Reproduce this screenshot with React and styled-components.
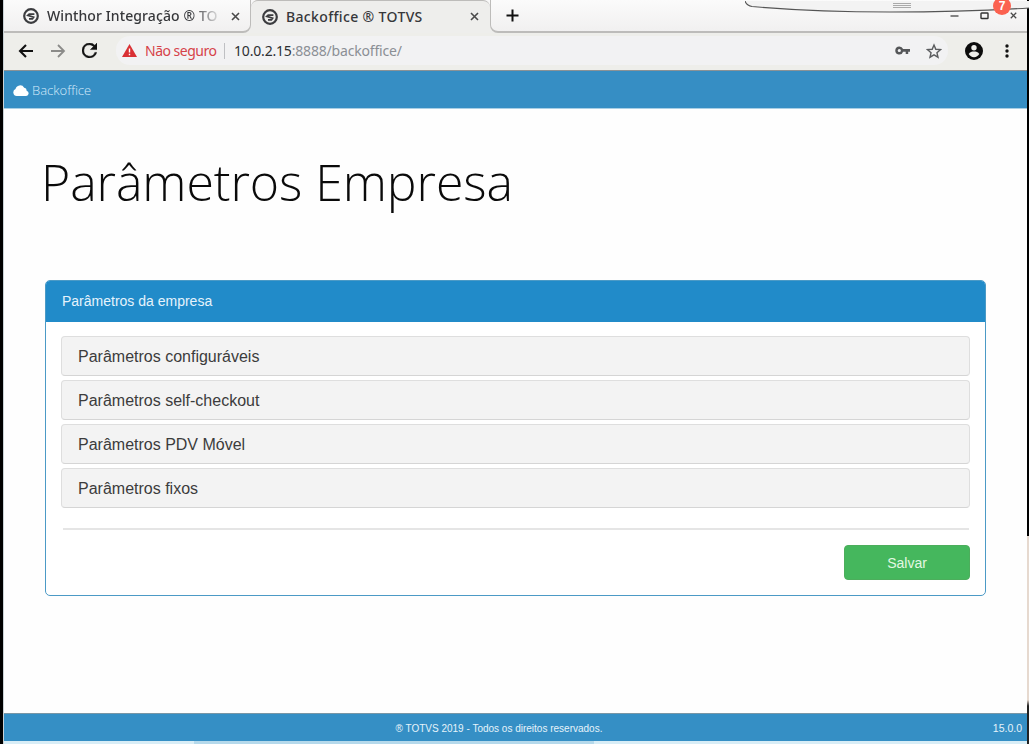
import React from "react";
import styled, { createGlobalStyle } from "styled-components";

const sections = [
  "Parâmetros configuráveis",
  "Parâmetros self-checkout",
  "Parâmetros PDV Móvel",
  "Parâmetros fixos",
];

const Favicon = () => (
  <svg width="16" height="16" viewBox="0 0 16 16" fill="none" stroke="#3b3c3f">
    <circle cx="8" cy="8" r="6.8" strokeWidth="2.2" />
    <path d="M11.400 6.200H6.200L4.800 7.400l5.800 1.800-1.200 1.600H6" strokeWidth="1.700" />
  </svg>
);

const Cross = ({ size = 9, color = "#4a4a4a" }) => (
  <svg width={size} height={size} viewBox="0 0 9 9" stroke={color} strokeWidth="1.6">
    <path d="M1 1l7 7M8 1L1 8" />
  </svg>
);

const Toolbar = () => (
  <StyledToolbar>
    <NavIcons>
      <svg width="16" height="16" viewBox="0 0 16 16" fill="none" stroke="#111" strokeWidth="2.1">
        <path d="M15 8H2M8 2L2 8l6 6" />
      </svg>
      <svg width="16" height="16" viewBox="0 0 16 16" fill="none" stroke="#8b8b89" strokeWidth="1.8">
        <path d="M1 8h13M8 2l6 6-6 6" />
      </svg>
      <svg width="15" height="15" viewBox="4 4 16 16" fill="#111" stroke="#111" strokeWidth=".5">
        <path d="M17.65 6.35A7.96 7.96 0 0 0 12 4a8 8 0 1 0 7.73 10h-2.08A6 6 0 1 1 12 6c1.66 0 3.14.69 4.22 1.78L13 11h7V4z" />
      </svg>
    </NavIcons>
    <AddressBar>
      <svg width="15" height="13" viewBox="0 0 15 13">
        <path d="M7.5 0L15 13H0z" fill="#d93034" />
        <path d="M7.5 4.5v4M7.5 9.7v1.6" stroke="#fff" strokeWidth="1.4" />
      </svg>
      <Warning>Não seguro</Warning>
      <Divider />
      <Url>
        <b>10.0.2.15</b>:8888/backoffice/
      </Url>
      <svg width="15" height="9" viewBox="0 0 15 9" fill="#555759">
        <path
          fillRule="evenodd"
          d="M4.3.5a4 4 0 1 0 3.8 5.2h2.6V8h2.5V5.7H15V3H8.1A4 4 0 0 0 4.3.5zm0 2.4a1.6 1.6 0 1 1 0 3.2 1.6 1.6 0 0 1 0-3.2z"
        />
      </svg>
      <StarIcon width="16" height="16" viewBox="0 0 24 24" fill="none" stroke="#5b5d5f" strokeWidth="2.1">
        <path d="M12 3l2.7 6.4 6.9.6-5.2 4.5 1.6 6.8-6-3.600-6 3.600 1.600-6.800L2.400 10l6.900-.6z" />
      </StarIcon>
    </AddressBar>
    <svg width="18" height="18" viewBox="0 0 18 18">
      <circle cx="9" cy="9" r="9" fill="#0c0c0c" />
      <circle cx="9" cy="5.8" r="2.7" fill="#eeeeea" />
      <path d="M3.7 12c1-2 3.300-2.400 5.300-2.400s4.300.4 5.300 2.400A6.400 6.400 0 0 1 9 15.200 6.400 6.400 0 0 1 3.700 12z" fill="#eeeeea" />
    </svg>
    <MenuIcon width="4" height="14" viewBox="0 0 4 14" fill="#111">
      <circle cx="2" cy="2" r="1.7" />
      <circle cx="2" cy="7" r="1.7" />
      <circle cx="2" cy="12" r="1.7" />
    </MenuIcon>
  </StyledToolbar>
);

const App = () => {
  return (
    <>
      <GlobalStyle />
      <Screen>
        <Window>
          <TabStrip>
            <TabSlot $width={247}>
              <Tab>
                <Favicon />
                <TabTitle $fade>Winthor Integração ® TO</TabTitle>
                <Cross />
              </Tab>
            </TabSlot>
            <TabSlot $width={239} $active>
              <Tab $active>
                <Favicon />
                <TabTitle $spacing="0.35px">Backoffice ® TOTVS</TabTitle>
                <Cross />
              </Tab>
            </TabSlot>
            <TabSlot>
              <StripEnd>
                <svg width="13" height="13" viewBox="0 0 13 13" stroke="#111" strokeWidth="2">
                  <path d="M6.5 .5v12M.5 6.5h12" />
                </svg>
                <WindowButtons>
                  <svg width="9" height="9" viewBox="0 0 9 9" stroke="#444" strokeWidth="1.3">
                    <path d="M.5 5h8" />
                  </svg>
                  <svg width="9" height="9" viewBox="0 0 9 9" fill="none" stroke="#333" strokeWidth="1.4">
                    <rect x="1" y="2" width="7" height="5.5" rx=".6" />
                  </svg>
                  <Cross size={7} />
                </WindowButtons>
              </StripEnd>
            </TabSlot>
          </TabStrip>
          <Toolbar />
          <Navbar>
            <svg width="16" height="11" viewBox="0 0 16 11" fill="#fff">
              <path d="M3.7 11A3.600 3.600 0 0 1 2.500 4.100 4.700 4.700 0 0 1 11.200 2.800a2.700 2.700 0 0 1 2.400 2.900A2.700 2.700 0 0 1 13.200 11z" />
            </svg>
            <span>Backoffice</span>
          </Navbar>
          <Content>
            <Title>Parâmetros Empresa</Title>
            <Panel>
              <PanelHeading>Parâmetros da empresa</PanelHeading>
              <PanelBody>
                {sections.map((section) => (
                  <Section key={section}>{section}</Section>
                ))}
                <Rule />
                <SaveButton type="button">Salvar</SaveButton>
              </PanelBody>
            </Panel>
          </Content>
          <Footer>
            <Copyright>® TOTVS 2019 - Todos os direitos reservados.</Copyright>
            <Version>15.0.0</Version>
          </Footer>
          <BottomEdge />
        </Window>
        <RightEdge />
        <Drawer>
          <svg width="284" height="13" viewBox="0 0 284 13" fill="none">
            <path d="M0 0C1 3 3 5 7 5.500Q70 11 145 11T284 7V0z" fill="#f3f3f3" />
            <path d="M0 0C1 3 3 5 7 5.500Q70 11 145 11T284 7" stroke="#555" strokeWidth="1.2" />
            <path d="M148 2.500h18M148 4.500h18M148 6.500h18" stroke="#aaa" />
          </svg>
          <Badge>7</Badge>
        </Drawer>
      </Screen>
    </>
  );
};

export default App;

const GlobalStyle = createGlobalStyle`
  * {
    box-sizing: border-box;
  }

  body {
    margin: 0;
    overflow: hidden;
    background-color: #fff;
    font-family: "Liberation Sans", sans-serif;
  }

  svg {
    flex: none;
  }
`;

const Screen = styled.div`
  position: relative;
  display: flex;
  width: 1029px;
  height: 744px;
  padding-left: 3px;
  background-color: #000;
`;

const Window = styled.div`
  flex: 1;
  min-width: 0;
  display: flex;
  flex-direction: column;
  background-color: #fefefe;
  border-left: 1px solid #c9d2d6;
`;

const RightEdge = styled.div`
  width: 2px;
  background: linear-gradient(#000 536px, #e6d9cf 536px, #e6d9cf 700px, #222 706px);
`;

const TabStrip = styled.div`
  display: flex;
  height: 33px;
`;

const TabSlot = styled.div`
  ${({ $width }) => ($width ? `width: ${$width}px;` : "flex: 1;")}
  flex-shrink: 0;
  background-color: ${({ $active }) => ($active ? "#f8f8f8" : "#eeeeec")};
`;

const Tab = styled.div`
  display: flex;
  align-items: center;
  height: 33px;
  padding: ${({ $active }) => ($active ? "0 11px 1px 11px" : "1px 10px 0 19px")};
  background: ${({ $active }) =>
    $active ? "#eeeeec" : "linear-gradient(#fbfbfb, #f1f0f0)"};
  border: 0 solid #bdbcba;
  border-width: ${({ $active }) => ($active ? "1px 0 0" : "0 1px 2px 0")};
  border-radius: ${({ $active }) => ($active ? "7px 7px 0 0" : "0 0 8px 0")};
`;

const TabTitle = styled.span`
  flex: 1;
  margin: 0 0 0 8px;
  white-space: nowrap;
  font: 500 14px/20px "Noto Sans", "Open Sans", sans-serif;
  letter-spacing: ${({ $spacing }) => $spacing || "0.1px"};
  color: #36373a;
  ${({ $fade }) =>
    $fade && "mask-image: linear-gradient(90deg, #000 145px, transparent 175px);"}
`;

const StripEnd = styled.div`
  display: flex;
  align-items: center;
  justify-content: space-between;
  height: 33px;
  padding: 0 10px 0 15px;
  background: linear-gradient(#fbfbfb, #f1f0f0);
  border: 0 solid #bdbcba;
  border-width: 0 0 2px 1px;
  border-radius: 0 0 0 8px;
`;

const WindowButtons = styled.div`
  display: flex;
  align-items: center;
  gap: 21px;
`;

const StyledToolbar = styled.div`
  display: flex;
  align-items: center;
  height: 38px;
  padding: 0 18px 2px 14px;
  background-color: #eeeeea;
  border-bottom: 1px solid #8b9296;
`;

const NavIcons = styled.div`
  display: flex;
  align-items: center;
  gap: 16px;
  width: 98px;
`;

const AddressBar = styled.div`
  flex: 1;
  display: flex;
  align-items: center;
  height: 29px;
  margin-right: 17px;
  padding: 0 6px;
  background-color: #f2f2f3;
  border-radius: 14px;
  font: 14px/20px "Noto Sans", "Open Sans", sans-serif;
`;

const Warning = styled.span`
  width: 71px;
  margin-left: 8px;
  white-space: nowrap;
  color: #d64249;
  letter-spacing: -0.5px;
`;

const Divider = styled.span`
  width: 1px;
  height: 16px;
  margin: 0 9px 0 8px;
  background-color: #bfc0c3;
`;

const Url = styled.span`
  flex: 1;
  color: #8b8f95;
  letter-spacing: -0.18px;

  b {
    font-weight: 400;
    color: #2e3033;
  }
`;

const StarIcon = styled.svg`
  margin-left: 16px;
`;

const MenuIcon = styled.svg`
  margin-left: 22px;
`;

const Navbar = styled.header`
  display: flex;
  align-items: center;
  gap: 3px;
  height: 38px;
  padding: 1px 9px 0;
  background-color: #368ec4;
  border-bottom: 1px solid #a9cfe5;
  color: #d5eafa;
  font: 300 13px/20px "Open Sans", sans-serif;
`;

const Content = styled.main`
  flex: 1;
  padding: 39px 41px 0;
`;

const Title = styled.h1`
  margin: -1px 0 63px -4px;
  font: 310 50px/70px "Open Sans", sans-serif;
  letter-spacing: -0.08px;
  white-space: nowrap;
  color: #0a0a0a;
`;

const Panel = styled.section`
  width: 941px;
  height: 316px;
  border: 1px solid #4b9ac6;
  border-radius: 5px;
  background-color: #fff;
`;

const PanelHeading = styled.div`
  height: 41px;
  padding-left: 16px;
  background-color: #218bc9;
  border-radius: 4px 4px 0 0;
  color: #e5f3fc;
  font-size: 14px;
  line-height: 40px;
`;

const PanelBody = styled.div`
  display: flex;
  flex-direction: column;
  gap: 4px;
  padding: 14px 15px;
`;

const Section = styled.div`
  height: 40px;
  padding-left: 16px;
  background-color: #f3f3f3;
  border: 1px solid #dedede;
  border-bottom-color: #d5d5d5;
  border-radius: 4px;
  color: #3c3c3c;
  font-size: 16px;
  line-height: 39px;
`;

const Rule = styled.hr`
  width: 906px;
  height: 2px;
  margin: 16px auto 11px;
  border: none;
  background-color: #e5e5e5;
`;

const SaveButton = styled.button`
  align-self: flex-end;
  width: 126px;
  height: 35px;
  border: 1px solid #4cae5c;
  border-radius: 4px;
  background-color: #45b75d;
  color: #e3f7e3;
  font: 14px "Liberation Sans", sans-serif;
`;

const Footer = styled.footer`
  display: grid;
  grid-template-columns: 1fr auto 1fr;
  align-items: center;
  height: 28px;
  padding: 1px 5px 0 0;
  background-color: #358fc5;
  border-top: 1px solid #7896a6;
  color: #e5f3fa;
  font-size: 10px;
`;

const Copyright = styled.span`
  grid-column: 2;
  margin-right: 28px;
  white-space: nowrap;
`;

const Version = styled.span`
  justify-self: end;
  font-size: 10.5px;
`;

const BottomEdge = styled.div`
  height: 3px;
  background: linear-gradient(90deg, #d8edf6 190px, #b5d9eb 190px, #b5d9eb 590px, #d8edf6 590px);
`;

const Drawer = styled.div`
  position: absolute;
  top: 0;
  right: 0;
  width: 284px;
  height: 13px;
`;

const Badge = styled.span`
  position: absolute;
  top: -3px;
  right: 18px;
  width: 18px;
  height: 18px;
  border-radius: 50%;
  background-color: #fb6250;
  color: #fff;
  font: 700 12px/19px "Liberation Sans", sans-serif;
  text-align: center;
`;
